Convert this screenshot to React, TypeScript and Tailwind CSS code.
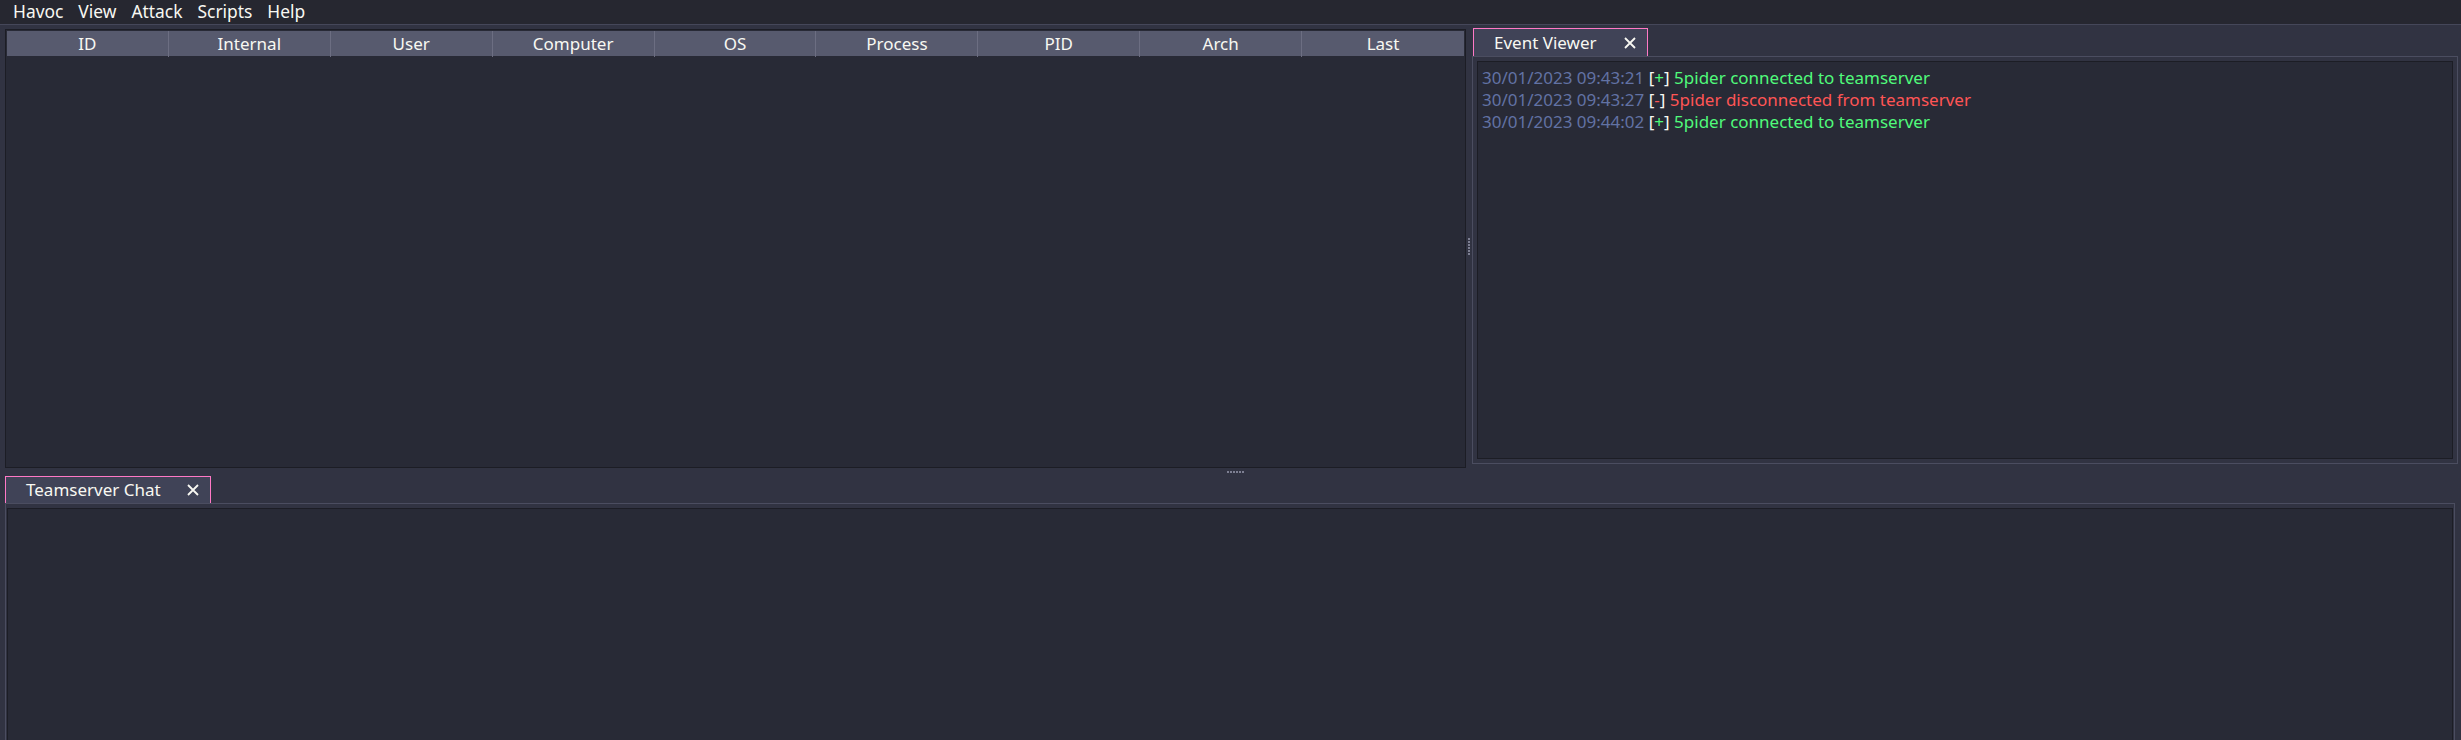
import React from "react";

const columns = ["ID", "Internal", "User", "Computer", "OS", "Process", "PID", "Arch", "Last"];
const menus = ["Havoc", "View", "Attack", "Scripts", "Help"];

interface EventLine {
  time: string;
  sign: string;
  text: string;
  ok: boolean;
}

const events: EventLine[] = [
  { time: "30/01/2023 09:43:21", sign: "+", text: "5pider connected to teamserver", ok: true },
  { time: "30/01/2023 09:43:27", sign: "-", text: "5pider disconnected from teamserver", ok: false },
  { time: "30/01/2023 09:44:02", sign: "+", text: "5pider connected to teamserver", ok: true },
];

function CloseIcon() {
  return (
    <svg width="12" height="12" viewBox="0 0 12 12" className="shrink-0">
      <path d="M1 1L11 11M11 1L1 11" stroke="#f8f8f2" strokeWidth="1.8" />
    </svg>
  );
}

function Tab({ label, gap }: { label: string; gap: string }) {
  return (
    <div
      className={`flex h-full items-center border border-b-0 border-[#ff79c6] bg-[#404357] pl-[20px] pr-[11px] ${gap}`}
    >
      <span>{label}</span>
      <CloseIcon />
    </div>
  );
}

function Grip({ vertical }: { vertical?: boolean }) {
  return (
    <div className={`flex ${vertical ? "flex-col" : "flex-row"} gap-[1px]`}>
      {[0, 1, 2, 3, 4, 5].map((i) => (
        <div key={i} className="h-[2px] w-[2px] bg-[#7d7f92]" />
      ))}
    </div>
  );
}

export default function App() {
  return (
    <div className="flex h-[740px] w-[2461px] flex-col overflow-hidden bg-[#313342] font-['Noto_Sans',sans-serif] text-[17px] text-[#f8f8f2]">
      {/* menu bar */}
      <div className="flex h-[25px] shrink-0 items-center gap-[15px] border-b border-[#454759] bg-[#262730] pl-[13px] text-[17.4px] leading-none">
        {menus.map((m) => (
          <span key={m}>{m}</span>
        ))}
      </div>

      {/* top: sessions table + event viewer */}
      <div className="flex h-[443px] shrink-0">
        <div className="ml-[5px] mt-[4px] flex w-[1461px] flex-col border border-[#1c1d25] bg-[#282a36] p-px">
          <div className="grid h-[25px] grid-cols-9 bg-[#575a6e]">
            {columns.map((c, i) => (
              <div
                key={c}
                className={`flex items-center justify-center ${i < columns.length - 1 ? "border-r border-[#6c6e82]" : ""}`}
              >
                {c}
              </div>
            ))}
          </div>
        </div>

        <div className="flex w-[6px] items-center justify-center">
          <Grip vertical />
        </div>

        <div className="flex flex-1 flex-col pt-[3px] pr-[3px] pb-[4px]">
          <div className="flex h-[28px] shrink-0 pl-px">
            <Tab label="Event Viewer" gap="gap-[27px]" />
          </div>
          <div className="flex flex-1 flex-col border border-[#4b4d60] p-[4px]">
            <div className="flex-1 border border-[#1c1d25] bg-[#282a36] px-[4px] pt-[5px] leading-[22px]">
              {events.map((e) => (
                <div key={e.time} className="whitespace-nowrap">
                  <span className="text-[#6272a4]">{e.time}</span>{" "}
                  <span>[</span>
                  <span className={e.ok ? "text-[#50fa7b]" : "text-[#ff5555]"}>{e.sign}</span>
                  <span>]</span>{" "}
                  <span className={e.ok ? "text-[#50fa7b]" : "text-[#ff5555]"}>{e.text}</span>
                </div>
              ))}
            </div>
          </div>
        </div>
      </div>

      {/* horizontal splitter */}
      <div className="flex h-[8px] shrink-0 items-center justify-center pl-[10px]">
        <Grip />
      </div>

      {/* bottom: teamserver chat */}
      <div className="flex flex-1 flex-col pl-[5px] pr-[6px]">
        <div className="flex h-[27px] shrink-0">
          <Tab label="Teamserver Chat" gap="gap-[26px]" />
        </div>
        <div className="flex flex-1 flex-col border border-b-0 border-[#4b4d60] px-px pt-[4px]">
          <div className="flex-1 border border-b-0 border-[#1c1d25] bg-[#282a36]" />
        </div>
      </div>
    </div>
  );
}
